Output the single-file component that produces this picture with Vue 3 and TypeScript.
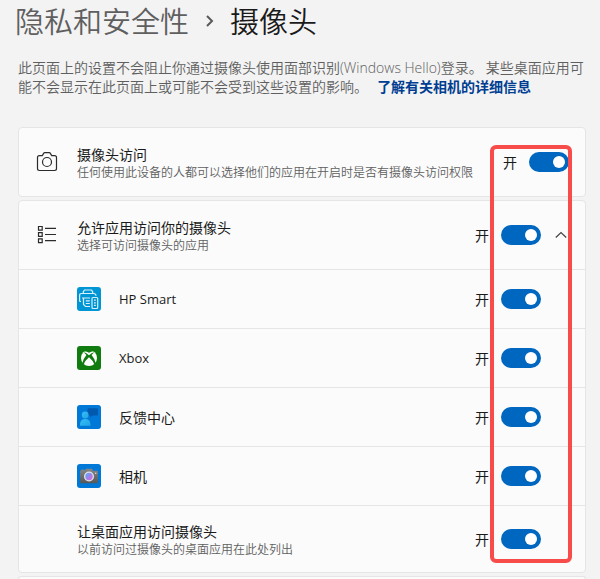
<script setup lang="ts">
import { ref } from 'vue'

interface AppItem {
  id: string
  name: string
  latin: boolean
  on: boolean
}

const cameraAccess = ref(true)
const appsAccess = ref(true)
const desktopAccess = ref(true)
const apps = ref<AppItem[]>([
  { id: 'hp', name: 'HP Smart', latin: true, on: true },
  { id: 'xbox', name: 'Xbox', latin: true, on: true },
  { id: 'feedback', name: '反馈中心', latin: false, on: true },
  { id: 'camera', name: '相机', latin: false, on: true },
])
const expanded = ref(true)
</script>

<template>
  <main class="page">
    <h1 class="crumbs">
      <a class="parent" href="#privacy">隐私和安全性</a>
      <svg class="sep" viewBox="0 0 10 14" aria-hidden="true"><path d="M2 3 7 8 2 13" /></svg>
      <span>摄像头</span>
    </h1>

    <p class="intro">
      此页面上的设置不会阻止你通过摄像头使用面部识别<span class="latin">(Windows Hello)</span>登录。 某些桌面应用可能不会显示在此页面上或可能不会受到这些设置的影响。
      <a class="more" href="#learn">了解有关相机的详细信息</a>
    </p>

    <div class="cards">
      <section class="card">
        <div class="row head">
          <svg class="glyph" viewBox="0 0 22 22" aria-hidden="true">
            <path d="M3.4 4.6H6.3L7.8 2.1Q8.1 1.600 8.700 1.600H13.300Q13.900 1.600 14.200 2.100L15.700 4.600H18.600Q20.500 4.600 20.500 6.500V17.600Q20.500 19.500 18.600 19.500H3.400Q1.500 19.500 1.500 17.600V6.500Q1.500 4.600 3.400 4.600Z" />
            <circle cx="11" cy="11" r="4.500" />
          </svg>
          <label class="text" for="t-camera">
            <span class="title">摄像头访问</span>
            <span class="sub">任何使用此设备的人都可以选择他们的应用在开启时是否有摄像头访问权限</span>
          </label>
          <label class="state" for="t-camera">{{ cameraAccess ? '开' : '关' }}</label>
          <input id="t-camera" v-model="cameraAccess" class="toggle" type="checkbox" role="switch" />
        </div>
      </section>

      <section class="card">
        <div class="row head">
          <svg class="glyph" viewBox="0 0 22 22" aria-hidden="true">
            <path d="M2.500 2.500h3.700v3.700h-3.700zM2.500 8.700h3.700v3.700h-3.700zM2.500 14.900h3.700v3.700h-3.700zM9 4.400h11M9 10.500h11M9 16.700h11" />
          </svg>
          <label class="text" for="t-apps">
            <span class="title">允许应用访问你的摄像头</span>
            <span class="sub">选择可访问摄像头的应用</span>
          </label>
          <label class="state" for="t-apps">{{ appsAccess ? '开' : '关' }}</label>
          <input id="t-apps" v-model="appsAccess" class="toggle" type="checkbox" role="switch" />
          <button class="expand" type="button" aria-label="展开" :aria-expanded="expanded" @click="expanded = !expanded">
            <svg viewBox="0 0 12 8" aria-hidden="true"><path d="M.8 6.500 6 1.500 11.200 6.500" /></svg>
          </button>
        </div>

        <template v-if="expanded">
          <div v-for="app in apps" :key="app.id" class="row app">
            <svg v-if="app.id === 'hp'" class="logo" viewBox="0 0 24 24" aria-hidden="true">
              <rect width="24" height="24" rx="3" fill="#0096d6" />
              <g fill="none" stroke="#d9f1fb" stroke-width="1.200">
                <path d="M6.300 6V4.800L7.500 3H14.500L15.700 4.800V6" />
                <path d="M2.600 14.500V8.500Q2.600 6.500 4.600 6.500H16.800Q18.800 6.500 19 8.800M2.600 14.500H4" />
                <path d="M5 11H13M6.500 11V17.500L8.500 19.500H13M8.800 13.800H12.800M8.800 16.500H12.800" />
                <rect x="15" y="10.500" width="5.700" height="11" rx="1" />
                <path d="M17 13.200h1.800M17 15.800h1.800M17 18.400h1.800" />
              </g>
            </svg>
            <svg v-else-if="app.id === 'xbox'" class="logo" viewBox="0 0 24 24" aria-hidden="true">
              <rect width="24" height="24" rx="3" fill="#107c10" />
              <circle cx="12" cy="12" r="8" fill="#fff" />
              <path d="M7 5.300Q9.500 5 12 6.800Q14.500 5 17 5.300L15.500 3H8.500Z" fill="#107c10" />
              <path d="M12 9.300Q8.800 6.300 6.500 6.200Q8 7.300 9.400 9.100Q5.800 13.500 5.300 17.300L6.600 18.500Q8 14.500 12 11.200Q16 14.500 17.400 18.500L18.700 17.300Q18.200 13.500 14.600 9.100Q16 7.300 17.500 6.200Q15.200 6.300 12 9.300Z" fill="#107c10" />
            </svg>
            <svg v-else-if="app.id === 'feedback'" class="logo" viewBox="0 0 24 24" aria-hidden="true">
              <defs>
                <linearGradient id="person" x1="0" y1="0" x2="1" y2="1">
                  <stop offset="0" stop-color="#35bdf3" />
                  <stop offset="1" stop-color="#22a5e8" />
                </linearGradient>
              </defs>
              <rect width="24" height="24" rx="3" fill="#0078d7" />
              <path d="M11.500 3.200H20Q21 3.200 21 4.200V9.600Q21 10.600 20 10.600H15.500L13.200 12.800V10.600H11.500Q10.500 10.600 10.500 9.600V4.200Q10.500 3.200 11.500 3.200Z" fill="#0059ad" />
              <circle cx="8.200" cy="10" r="3.400" fill="url(#person)" />
              <path d="M3 20.800V19Q3.400 14 8.200 14T13.400 19V20.800Z" fill="url(#person)" />
            </svg>
            <svg v-else class="logo" viewBox="0 0 24 24" aria-hidden="true">
              <defs>
                <linearGradient id="body" x1="0" y1="0" x2="0" y2="1">
                  <stop offset="0" stop-color="#858789" />
                  <stop offset="1" stop-color="#55585b" />
                </linearGradient>
                <linearGradient id="lens" x1="0" y1="0" x2="1" y2="1">
                  <stop offset="0" stop-color="#4cb4f5" />
                  <stop offset=".5" stop-color="#9b83ee" />
                  <stop offset="1" stop-color="#dc65df" />
                </linearGradient>
              </defs>
              <rect width="24" height="24" rx="3" fill="#0078d7" />
              <path d="M4.500 6.200V5.400H7.500V6.200H8.200L9 4.800H15L16 6.800H20Q21 6.800 21 7.800V18.200Q21 19.200 20 19.200H4Q3 19.200 3 18.200V7.200Q3 6.200 4 6.200Z" fill="url(#body)" />
              <circle cx="12" cy="12.500" r="5" fill="#e3e3e8" />
              <circle cx="12" cy="12.500" r="3.700" fill="url(#lens)" />
              <circle cx="18.700" cy="9.300" r=".8" fill="#d8dadc" />
            </svg>
            <label class="text" :class="{ latin: app.latin }" :for="'t-' + app.id">{{ app.name }}</label>
            <label class="state" :for="'t-' + app.id">{{ app.on ? '开' : '关' }}</label>
            <input :id="'t-' + app.id" v-model="app.on" class="toggle" type="checkbox" role="switch" />
          </div>

          <div class="row desktop">
            <label class="text" for="t-desktop">
              <span class="title">让桌面应用访问摄像头</span>
              <span class="sub">以前访问过摄像头的桌面应用在此处列出</span>
            </label>
            <label class="state" for="t-desktop">{{ desktopAccess ? '开' : '关' }}</label>
            <input id="t-desktop" v-model="desktopAccess" class="toggle" type="checkbox" role="switch" />
          </div>
        </template>
      </section>

      <section class="card next"></section>

      <div class="highlight" aria-hidden="true"></div>
    </div>
  </main>
</template>

<style>
body {
  margin: 0;
  background: #f3f3f3;
}
</style>

<style scoped>
.page {
  padding: 2px 14px 0 18px;
  color: #1a1a1a;
  font-family: "Noto Sans CJK SC", sans-serif;
  font-size: 14px;
  line-height: 18px;
}
.latin {
  font-family: "Open Sans", "Noto Sans CJK SC", sans-serif;
}
.crumbs {
  display: flex;
  align-items: center;
  margin: 0 0 20px -3px;
  font-size: 29px;
  line-height: 36px;
  font-weight: 350;
}
.parent {
  color: #5f5f5f;
  text-decoration: none;
}
.sep {
  width: 10px;
  height: 14px;
  margin: 0 15px 0 16px;
  fill: none;
  stroke: #5a5a5a;
  stroke-width: 2;
}
.intro {
  margin: 0 -4px 32px 0;
  color: #5f5f5f;
  font-weight: 350;
}
.more {
  margin-left: 6px;
  color: #003e92;
  font-weight: 700;
  text-decoration: none;
}
.cards {
  position: relative;
  display: flex;
  flex-direction: column;
  gap: 3px;
}
.card {
  border: 1px solid #e5e5e5;
  border-radius: 4px;
  background: #fbfbfb;
}
.next {
  min-height: 2px;
  border-bottom: 0;
  border-radius: 4px 4px 0 0;
}
.row {
  display: flex;
  align-items: center;
  padding: 0 44px 0 58px;
  border-top: 1px solid #e5e5e5;
}
.head {
  height: 68px;
  padding: 0 16px 0 17px;
  border-top: 0;
}
.app {
  height: 58px;
}
.desktop {
  height: 66px;
}
.glyph {
  width: 22px;
  height: 22px;
  margin-right: 19px;
  fill: none;
  stroke: #2b2b2b;
  stroke-width: 1.2;
}
.logo {
  width: 24px;
  height: 24px;
  margin-right: 18px;
}
.text {
  display: flex;
  flex: 1;
  flex-direction: column;
  white-space: nowrap;
}
.head .text,
.desktop .text {
  padding-top: 2px;
}
.app .latin {
  font-size: 13px;
}
.sub {
  color: #5f5f5f;
  font-size: 12px;
  font-weight: 350;
}
.state {
  margin-right: 12px;
}
.toggle {
  appearance: none;
  display: flex;
  align-items: center;
  box-sizing: border-box;
  width: 40px;
  height: 20px;
  margin: 0;
  padding: 0 4px;
  border-radius: 10px;
  background: #8a8a8a;
}
.toggle::before {
  content: "";
  width: 12px;
  height: 12px;
  border-radius: 50%;
  background: #fff;
}
.toggle:checked {
  justify-content: flex-end;
  background: #0067c0;
}
.expand {
  display: flex;
  width: 12px;
  height: 20px;
  margin-left: 14px;
  margin-right: 2px;
  padding: 0;
  align-items: center;
  border: 0;
  background: none;
}
.expand svg {
  width: 12px;
  height: 8px;
  fill: none;
  stroke: #444;
  stroke-width: 1.2;
}
.highlight {
  position: absolute;
  top: 18px;
  right: 14px;
  box-sizing: border-box;
  width: 82px;
  height: 418px;
  border: 4px solid #f74c4a;
  border-radius: 6px;
  pointer-events: none;
}
</style>
